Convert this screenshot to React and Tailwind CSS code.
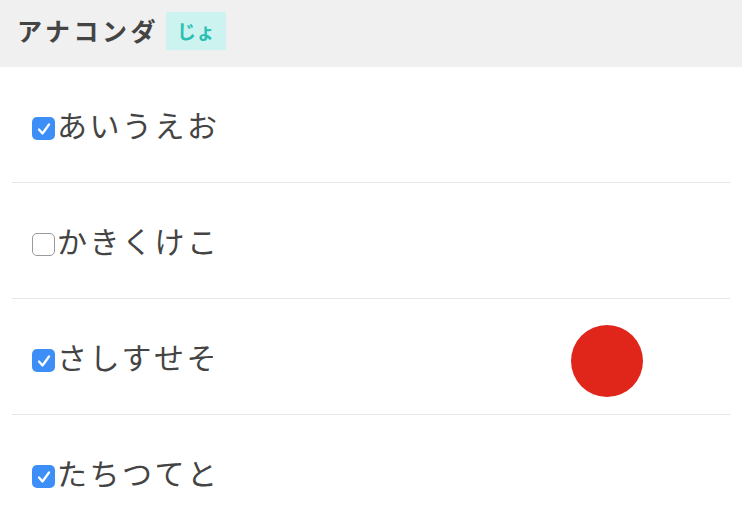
import React from "react";

const font = { fontFamily: '"Noto Sans CJK JP", "Noto Sans", sans-serif' };

function Check({ checked }) {
  if (checked) {
    return (
      <span className="flex h-[23px] w-[23px] shrink-0 items-center justify-center rounded-[5px] bg-[#3d8ff7]">
        <svg width="16" height="16" viewBox="0 0 16 16" fill="none">
          <path d="M3 8.5 L6.5 12.5 L13 3.5" stroke="white" strokeWidth="2.3" strokeLinecap="round" strokeLinejoin="round" />
        </svg>
      </span>
    );
  }
  return <span className="block h-[23px] w-[23px] shrink-0 rounded-[5px] border border-[#9a9a9a] bg-white" />;
}

const rows = [
  { text: "あいうえお", checked: true },
  { text: "かきくけこ", checked: false },
  { text: "さしすせそ", checked: true, dot: true },
  { text: "たちつてと", checked: true },
];

export default function App() {
  return (
    <div className="h-[522px] w-[742px] overflow-hidden bg-white" style={font}>
      <div className="flex h-[67px] items-center gap-[7px] bg-[#f0f0f0] pb-[5px] pl-[17px]">
        <span className="text-[25px] font-bold tracking-[3.5px] text-[#444]">アナコンダ</span>
        <span className="flex h-[38px] w-[60px] items-center justify-center bg-[#cdf3f0] text-[19px] font-bold text-[#2bbfb4]">じょ</span>
      </div>
      <div className="mx-[12px]">
        {rows.map((r) => (
          <div key={r.text} className="flex h-[116px] items-center border-b border-[#e6e6e6] pl-[20px]">
            <div className="flex items-center gap-[2px]">
              <div className="mt-[8px]"><Check checked={r.checked} /></div>
              <span className="text-[30px] tracking-[2.5px] text-[#444]">{r.text}</span>
            </div>
            {r.dot && <div className="ml-auto mr-[87px] mt-[8px] h-[72px] w-[72px] rounded-full bg-[#e0261a]" />}
          </div>
        ))}
      </div>
    </div>
  );
}
